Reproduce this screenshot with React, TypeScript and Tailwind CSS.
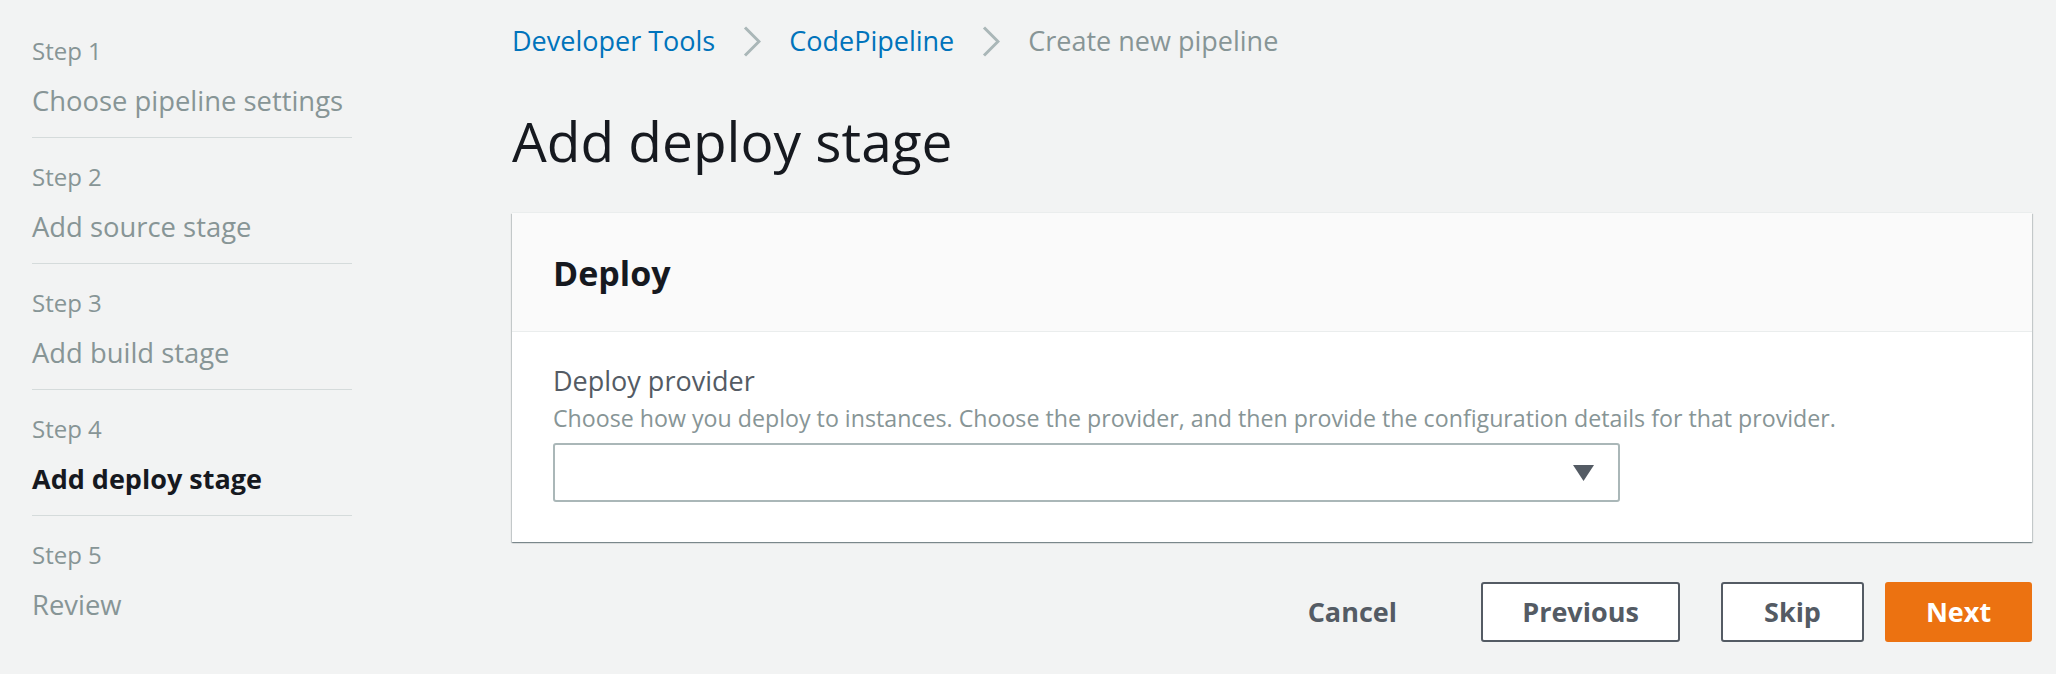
import React from "react";

const steps = [
  { label: "Step 1", title: "Choose pipeline settings" },
  { label: "Step 2", title: "Add source stage" },
  { label: "Step 3", title: "Add build stage" },
  { label: "Step 4", title: "Add deploy stage", active: true },
  { label: "Step 5", title: "Review" },
];

function Chevron() {
  return (
    <svg width="18" height="31" viewBox="0 0 18 31" className="mx-[28px] shrink-0">
      <polyline points="2,1.5 16,15.5 2,29.5" fill="none" stroke="#aab7b8" strokeWidth="3" />
    </svg>
  );
}

export default function App() {
  return (
    <div className="min-h-screen w-full bg-[#f2f3f3] font-['Open_Sans',sans-serif] flex">
      <aside className="w-[512px] shrink-0 pl-8 pt-[12px]">
        <nav className="w-[320px]">
          {steps.map((s, i) => (
            <div
              key={s.label}
              className={
                i < steps.length - 1
                  ? "pt-[23px] pb-[18px] border-b border-[#d5dbdb]"
                  : "pt-[23px] pb-[18px]"
              }
            >
              <div className="text-[24px] leading-[32px] text-[#879596]">{s.label}</div>
              <div
                className={
                  s.active
                    ? "mt-4 text-[27px] leading-[36px] font-bold text-[#16191f]"
                    : "mt-4 text-[27.4px] leading-[36px] text-[#879596]"
                }
              >
                {s.title}
              </div>
            </div>
          ))}
        </nav>
      </aside>

      <main className="flex-1 pr-6 pt-[21px]">
        <div className="flex items-center h-[40px] text-[27px] leading-[40px]">
          <span className="text-[#0073bb]">Developer Tools</span>
          <Chevron />
          <span className="text-[#0073bb]">CodePipeline</span>
          <Chevron />
          <span className="text-[#879596]">Create new pipeline</span>
        </div>

        <h1 className="mt-[48px] text-[55px] leading-[64px] font-normal text-[#16191f]">
          Add deploy stage
        </h1>

        <section className="mt-[40px] bg-white shadow-[0_1px_1px_0_rgba(0,28,36,0.3),1px_1px_1px_0_rgba(0,28,36,0.15),-1px_1px_1px_0_rgba(0,28,36,0.15),0_-1px_0_0_#eaeded]">
          <div className="bg-[#fafafa] pt-[38px] pb-[36px] px-[41px] border-b border-[#eaeded]">
            <h2 className="text-[34px] leading-[44px] font-bold text-[#16191f]">Deploy</h2>
          </div>
          <div className="pt-[31px] pb-[40px] px-[41px]">
            <div className="text-[27px] leading-[36px] text-[#545b64]">Deploy provider</div>
            <div className="mt-[4px] text-[23.2px] leading-[30px] text-[#879596]">
              Choose how you deploy to instances. Choose the provider, and then provide the configuration details for that provider.
            </div>
            <div className="mt-[10px] w-[1067px] h-[59px] border-2 border-[#aab7b8] rounded-[3px] bg-white flex items-center justify-end pr-[24px]">
              <svg width="21" height="16" viewBox="0 0 21 16">
                <polygon points="0,0 21,0 10.5,16" fill="#545b64" />
              </svg>
            </div>
          </div>
        </section>

        <div className="mt-[40px] flex justify-end items-center">
          <button className="h-[60px] px-[42px] mr-[42px] text-[27px] font-bold text-[#545b64] bg-transparent">
            Cancel
          </button>
          <button className="h-[60px] w-[199px] border-2 border-[#545b64] rounded-[3px] bg-white text-[27px] font-bold text-[#545b64] flex items-center justify-center">
            Previous
          </button>
          <button className="ml-[41px] h-[60px] w-[143px] border-2 border-[#545b64] rounded-[3px] bg-white text-[27px] font-bold text-[#545b64] flex items-center justify-center">
            Skip
          </button>
          <button className="ml-[21px] h-[60px] w-[147px] border-2 border-[#ec7211] rounded-[3px] bg-[#ec7211] text-[27px] font-bold text-white flex items-center justify-center">
            Next
          </button>
        </div>
      </main>
    </div>
  );
}
